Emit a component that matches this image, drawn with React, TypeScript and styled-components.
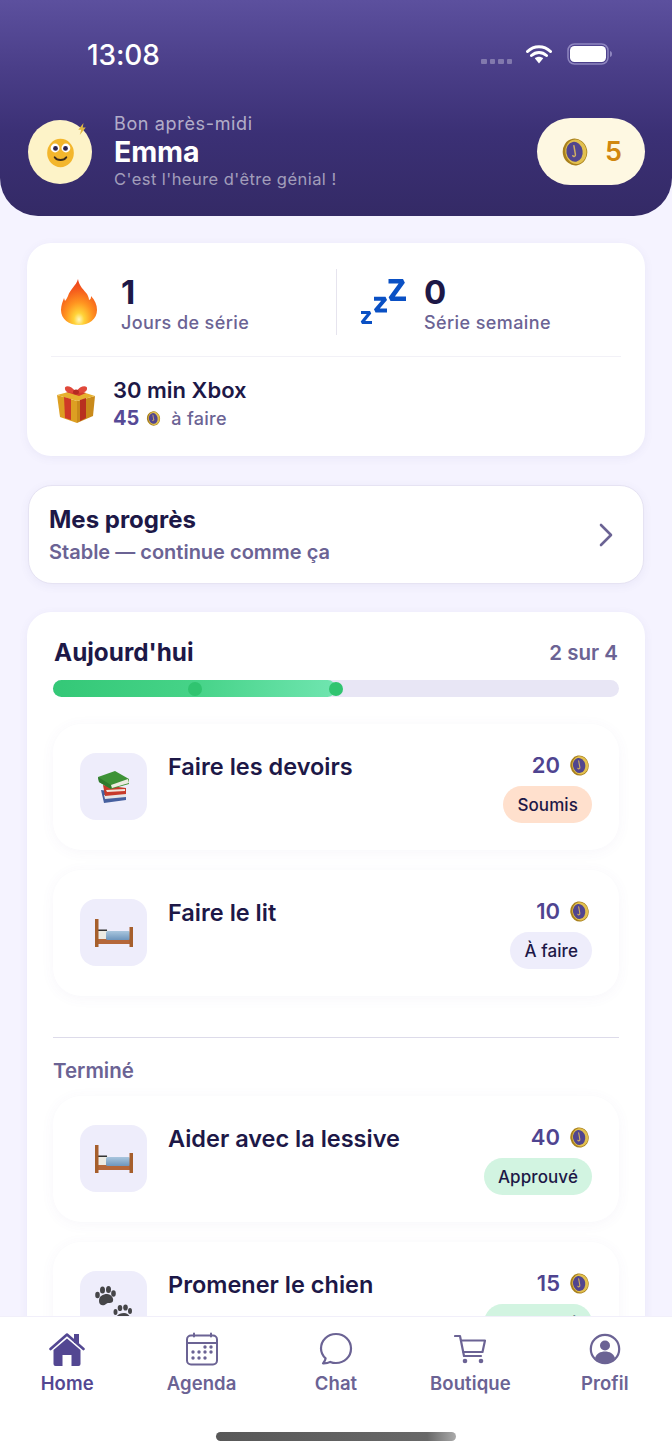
import React from "react";
import styled, { createGlobalStyle } from "styled-components";

const Global = createGlobalStyle`
  html, body { margin: 0; padding: 0; background: #f5f3ff; }
  * { box-sizing: border-box; }
  body { font-family: Inter, "Noto Sans", "Liberation Sans", sans-serif; }
`;

const Screen = styled.div`
  width: 672px; height: 1454px; display: flex; flex-direction: column;
  background: #f5f3ff; overflow: hidden;
`;
const Scroll = styled.main`flex: 1; min-height: 0; overflow: hidden;`;
const Header = styled.header`
  height: 216px; padding-bottom: 26px;
  background: linear-gradient(180deg, #5c509e 0%, #4a3e88 32%, #3b3075 62%, #342a66 100%);
  border-radius: 0 0 38px 38px;
`;
const StatusBar = styled.div`
  height: 113px; padding: 36px 59px 0 87px; display: flex; align-items: flex-start; justify-content: space-between;
`;
const Clock = styled.span`font-size: 28px; line-height: 38px; font-weight: 500; color: #fff; letter-spacing: -0.1px;`;
const StatusIcons = styled.div`display: flex; align-items: center; height: 36px;`;
const SignalDots = styled.div`display: flex; gap: 3px; margin: 14px 14px 0 0;`;
const SignalDot = styled.i`width: 5.5px; height: 5px; border-radius: 1px; background: rgba(255,255,255,.3);`;
const Greeting = styled.div`display: flex; align-items: center; height: 77px; padding: 0 27px 0 28px;`;
const Avatar = styled.div`
  position: relative; width: 64px; height: 64px; border-radius: 50%; background: #fdf3c8;
  display: flex; align-items: center; justify-content: center; flex: none;
`;
const AvatarSpark = styled.svg`position: absolute; right: 5px; top: 3px;`;
const GreetText = styled.div`flex: 1; margin-left: 22px; display: flex; flex-direction: column;`;
const Hello = styled.span`font-size: 18px; line-height: 21px; color: rgba(255,255,255,.62); letter-spacing: .65px;`;
const Name = styled.span`font-size: 28.5px; line-height: 35px; font-weight: 700; color: #fff; letter-spacing: -.1px;`;
const Tagline = styled.span`font-size: 16.5px; line-height: 21px; color: rgba(255,255,255,.55); letter-spacing: .45px;`;
const CoinPill = styled.div`
  width: 108px; height: 67px; border-radius: 34px; background: #fef8e2;
  display: flex; align-items: center; padding-left: 24px; gap: 16px;
`;
const CoinCount = styled.span`font-size: 27px; font-weight: 600; color: #d1870f;`;

const Content = styled.div`padding: 27px 27px 0; display: flex; flex-direction: column;`;
const Card = styled.section`background: #fff; border-radius: 24px; box-shadow: 0 2px 10px rgba(91,78,156,.07);`;
const StatsCard = styled(Card)`padding: 26px 24px 25px;`;
const StatsRow = styled.div`display: flex; height: 66px;`;
const Stat = styled.div<{ $gap: number; $pad: number; $line?: boolean }>`
  display: flex; align-items: center; gap: ${p => p.$gap}px; padding-left: ${p => p.$pad}px;
  width: ${p => (p.$line ? "286px" : "auto")}; flex: none;
  border-right: ${p => (p.$line ? "1px solid #e6e4ee" : "0")};
`;
const StatText = styled.div`display: flex; flex-direction: column; margin-top: 2px;`;
const StatNum = styled.span`font-size: 33px; line-height: 40px; font-weight: 700; color: #1d1847;`;
const StatLabel = styled.span`font-size: 18px; line-height: 22px; font-weight: 500; color: #6b6394; letter-spacing: .4px;`;
const HDivider = styled.hr`border: 0; height: 1px; background: #f2f1f7; margin: 21px 0 0;`;
const RewardRow = styled.div`display: flex; align-items: center; gap: 17px; padding: 20px 0 0 5px;`;
const RewardText = styled.div`display: flex; flex-direction: column; gap: 2px;`;
const RewardTitle = styled.span`font-size: 22px; line-height: 26px; font-weight: 600; color: #1d1847;`;
const RewardMeta = styled.span`display: flex; align-items: center; height: 26px; gap: 7px;`;
const RewardCost = styled.b`font-size: 20px; font-weight: 700; color: #564a96;`;
const RewardTodo = styled.span`font-size: 18px; font-weight: 500; color: #6b6394; margin-left: 3px; letter-spacing: .3px;`;

const ProgressCard = styled(Card)`
  margin: 29px 1px 0; height: 99px; padding: 0 30px 0 20px; display: flex; align-items: center; justify-content: space-between;
  border: 1px solid #e6e3f3;
`;
const ProgressText = styled.div`display: flex; flex-direction: column; gap: 5px; padding-top: 2px;`;
const ProgressTitle = styled.span`font-size: 24px; line-height: 28px; font-weight: 700; color: #1d1847;`;
const ProgressSub = styled.span`font-size: 20px; line-height: 26px; font-weight: 600; color: #6b6394;`;

const TodayCard = styled(Card)`margin-top: 28px; padding: 26px 26px 0;`;
const TodayHead = styled.div`display: flex; justify-content: space-between; align-items: center; padding: 0 1px 0 1px;`;
const TodayTitle = styled.h2`margin: 0; font-size: 24.3px; line-height: 28px; font-weight: 700; color: #1d1847;`;
const TodayCount = styled.span`font-size: 20.5px; font-weight: 600; color: #6b6394;`;
const Bar = styled.div`position: relative; height: 17px; margin-top: 14px; border-radius: 9px; background: #e8e6f5;`;
const BarFill = styled.div`height: 100%; border-radius: 9px; background: linear-gradient(90deg, #34c877 0%, #46d388 50%, #70e5b0 100%);`;
const BarDot = styled.i`position: absolute; top: 1.5px; width: 14px; height: 14px; margin-left: -7px; border-radius: 50%; background: #30c470;`;
const TaskList = styled.div`display: flex; flex-direction: column; gap: 20px;`;
const TopList = styled(TaskList)`margin-top: 27px;`;
const Task = styled.article`
  height: 126px; padding: 29px 27px 0; display: flex; align-items: flex-start; gap: 21px; border-radius: 28px; background: #fff;
  box-shadow: 0 2px 14px rgba(91,78,156,.05);
`;
const TaskIcon = styled.div`
  width: 67px; height: 67px; flex: none; border-radius: 16px; background: #eeedfb;
  display: flex; align-items: center; justify-content: center;
`;
const TaskTitle = styled.h3`flex: 1; margin: 0; font-size: 23.5px; line-height: 28px; font-weight: 600; color: #1d1847;`;
const TaskSide = styled.div`display: flex; flex-direction: column; align-items: flex-end; gap: 9px;`;
const Amount = styled.div`display: flex; align-items: center; gap: 9px; height: 24px; margin-right: 2px;`;
const AmountNum = styled.b`font-size: 22px; font-weight: 600; color: #4f4490;`;
const Badge = styled.span<{ $bg: string }>`
  height: 37px; padding: 0 14px; border-radius: 19px; display: flex; align-items: center;
  background: ${p => p.$bg}; font-size: 17px; font-weight: 500; color: #1d1847; letter-spacing: .1px;
`;
const Section = styled.hr`border: 0; height: 1px; background: #dddbea; margin: 41px 0 21px;`;
const SectionLabel = styled.div`font-size: 20.5px; line-height: 24px; font-weight: 600; color: #6b6394; margin-bottom: 13px;`;

const TabBar = styled.nav`height: 138px; flex: none; background: #fff; border-top: 1px solid #f1effa; padding-top: 15px;`;
const Tabs = styled.div`display: grid; grid-template-columns: repeat(5, 1fr);`;
const TabItem = styled.div<{ $active?: boolean }>`
  display: flex; flex-direction: column; align-items: center; color: ${p => (p.$active ? "#534792" : "#6b6394")};
`;
const TabIcon = styled.div`height: 34px; display: flex; align-items: center; justify-content: center;`;
const TabLabel = styled.span`margin-top: 5px; font-size: 18.5px; line-height: 24px; font-weight: 600; letter-spacing: .1px;`;
const HomeBar = styled.div`
  width: 240px; height: 9px; margin: 37px auto 0; border-radius: 5px;
  background: linear-gradient(90deg, #585858 0%, #686868 88%, #aaa 100%);
`;

const Coin = ({ size }: { size: number }) => (
  <svg width={size} height={size} viewBox="0 0 24 24" style={{ flex: "none" }}>
    <g transform="rotate(-10 12 12)">
      <ellipse cx="12" cy="12" rx="10.5" ry="11.500" fill="#a9801c" />
      <ellipse cx="12.800" cy="12" rx="9" ry="10.500" fill="#e2c04f" />
      <ellipse cx="11.600" cy="11.800" rx="7" ry="8.600" fill="#51458f" />
      <path d="M12 6.500v7.500M12 14c0 2-2 2-2.400.8" stroke="#d0ae62" strokeWidth="1.300" fill="none" strokeLinecap="round" />
    </g>
  </svg>
);

const Smiley = () => (
  <svg width="29" height="30" viewBox="0 0 34 36" style={{ marginTop: 2 }}>
    <ellipse cx="17" cy="18" rx="16" ry="17" fill="#f3b62c" />
    <circle cx="10.500" cy="12" r="5.300" fill="#fff" /><circle cx="23.500" cy="12" r="5.300" fill="#fff" />
    <circle cx="11" cy="12.500" r="2.900" fill="#2c2450" /><circle cx="23" cy="12.500" r="2.900" fill="#2c2450" />
    <path d="M10 23c3 4.500 11 4.500 14 0" stroke="#3a2a1a" strokeWidth="2.200" fill="none" strokeLinecap="round" />
  </svg>
);

const Fire = () => (
  <svg width="38" height="46" viewBox="0 0 38 46" style={{ flex: "none" }}>
    <defs>
      <radialGradient id="fl" cx=".5" cy=".88" r=".9">
        <stop offset="0" stopColor="#fff8c0" /><stop offset=".16" stopColor="#ffd338" />
        <stop offset=".42" stopColor="#ff9420" /><stop offset=".75" stopColor="#f4561c" /><stop offset="1" stopColor="#ea3f1c" />
      </radialGradient>
    </defs>
    <path fill="url(#fl)" d="M18 0c1 7 6 11 9 15 1 2 2 4 2 6 2-1 2-2 2-4 4 4 6 9 6 14 0 9-8 15-18 15S1 40 1 31c0-5 2-9 3-12l1 3c1-1 2-3 3-5 2-7 8-10 10-17Z" />
  </svg>
);

const Zzz = () => (
  <svg width="46" height="46" viewBox="0 0 46 46" style={{ flex: "none" }} fill="none" stroke="#0a50c4" strokeLinejoin="bevel">
    <path d="M28.500 2.300H43L30.500 19.700H46" strokeWidth="4.600" />
    <path d="M14 19.800h11.500L15.500 31.500H27" strokeWidth="4" />
    <path d="M1 33.500h9L2 43.500h10" strokeWidth="3.200" />
  </svg>
);

const Gift = () => (
  <svg width="40" height="40" viewBox="0 0 40 40" style={{ flex: "none" }}>
    <path d="M1 11l20 6v22L4 33Z" fill="#dd9f22" />
    <path d="M21 17l18-5-2 20-16 7Z" fill="#c98a1a" />
    <path d="M1 11L20 6l19 6-18 5Z" fill="#e6b12f" />
    <path d="M8 13l7 2v21l-6-2Z" fill="#cf3a26" />
    <path d="M30 14l-6 2v21l6-3Z" fill="#b8301f" />
    <path d="M10 8l10-2 10 3-7 3Z" fill="#d43c2c" />
    <path d="M20 8C15 1 8 1 9 5c0 3 6 5 11 3Zm0 0c4-7 12-7 11-3 0 3-6 5-11 3Z" fill="#e0483a" />
    <ellipse cx="20" cy="8" rx="3" ry="2.500" fill="#b52b22" />
  </svg>
);

const Books = () => (
  <svg width="34" height="34" viewBox="0 0 34 34">
    <path d="M4 20l25 3 0 7-22 3Z" fill="#46609f" />
    <path d="M7 25l22-2v4L8 29Z" fill="#e6e6e6" />
    <path d="M6 15l23 3 0 6L8 26Z" fill="#c73a2a" />
    <path d="M9 20l19-1 0 2-18 1Z" fill="#f1e6dc" />
    <path d="M1 7l17-6 14 8v5L14 19 2 12Z" fill="#3d9236" />
    <path d="M14 15l17-6 1 4-17 5Z" fill="#ecebe0" />
    <path d="M1 7l13 8v4L2 12Z" fill="#2f7a2d" />
  </svg>
);

const Bed = () => (
  <svg width="38" height="28" viewBox="0 0 38 28">
    <defs>
      <linearGradient id="mat" x1="0" x2="0" y1="0" y2="1">
        <stop offset="0" stopColor="#a9c6de" /><stop offset="1" stopColor="#6e96bd" />
      </linearGradient>
    </defs>
    <rect x="3" y="17" width="32" height="8" fill="#b5673a" />
    <rect x="3" y="11" width="10" height="9" fill="#ecebe4" />
    <rect x="11" y="12" width="24" height="9" rx="1.500" fill="url(#mat)" />
    <rect x="3" y="10.500" width="9" height="1.500" fill="#333" />
    <rect x="0" y="0" width="3.500" height="28" fill="#a65f2c" />
    <rect x="34.500" y="8" width="3.500" height="20" fill="#a65f2c" />
  </svg>
);

const Paws = () => (
  <svg width="38" height="38" viewBox="0 0 38 38" fill="#454548">
    <path d="M4 15c0-5 4-7 8-7s7 4 6 7-5 1-7 3-7 2-7-3Z" />
    <ellipse cx="2.500" cy="9" rx="2.300" ry="3.300" /><ellipse cx="7.500" cy="4" rx="2.500" ry="3.500" />
    <ellipse cx="13.500" cy="3.500" rx="2.500" ry="3.500" /><ellipse cx="18.500" cy="7.500" rx="2.300" ry="3.200" />
    <g transform="translate(19 19)">
      <path d="M2 14c0-4 4-6 8-6s6 3 6 5-4 2-6 3-8 2-8-2Z" />
      <ellipse cx="1.500" cy="7" rx="2" ry="3" /><ellipse cx="6" cy="3" rx="2.300" ry="3.100" />
      <ellipse cx="11.500" cy="2.500" rx="2.300" ry="3.100" /><ellipse cx="16" cy="6" rx="2" ry="2.900" />
    </g>
  </svg>
);

const tasks1 = [
  { icon: <Books />, title: "Faire les devoirs", amount: 20, status: "Soumis", bg: "#ffe0cd" },
  { icon: <Bed />, title: "Faire le lit", amount: 10, status: "À faire", bg: "#eeedfb" },
];
const tasks2 = [
  { icon: <Bed />, title: "Aider avec la lessive", amount: 40, status: "Approuvé", bg: "#d2f4e1" },
  { icon: <Paws />, title: "Promener le chien", amount: 15, status: "Approuvé", bg: "#d2f4e1" },
];

const TaskRow = ({ t }: { t: typeof tasks1[number] }) => (
  <Task>
    <TaskIcon>{t.icon}</TaskIcon>
    <TaskTitle>{t.title}</TaskTitle>
    <TaskSide>
      <Amount><AmountNum>{t.amount}</AmountNum><Coin size={21} /></Amount>
      <Badge $bg={t.bg}>{t.status}</Badge>
    </TaskSide>
  </Task>
);

const stroke = { fill: "none", stroke: "currentColor", strokeWidth: 2.4, strokeLinecap: "round", strokeLinejoin: "round" } as const;

const tabs = [
  { label: "Home", active: true, icon: (
    <svg width="36" height="34" viewBox="0 0 36 34" fill="currentColor">
      <path d="M1.500 17L18 2.500 34.500 17" {...stroke} strokeWidth={2.600} />
      <rect x="25" y="2" width="5" height="9" />
      <path d="M4.500 18L18 6.500 31.500 18v14a2 2 0 0 1-2 2h-7V23h-9v11h-7a2 2 0 0 1-2-2Z" />
    </svg>) },
  { label: "Agenda", icon: (
    <svg width="34" height="34" viewBox="0 0 34 34" fill="currentColor">
      <rect x="2" y="3.500" width="30" height="29" rx="4" {...stroke} strokeWidth={2} />
      <path d="M2 11h30M9 1.500v3M26 1.500v3" {...stroke} strokeWidth={2} />
      {[[20, 15], [26, 15], [8, 20], [14, 20], [20, 20], [26, 20], [8, 26], [14, 26], [20, 26]].map(([x, y]) => (
        <circle key={`${x}-${y}`} cx={x} cy={y} r="1.700" />
      ))}
    </svg>) },
  { label: "Chat", icon: (
    <svg width="34" height="34" viewBox="0 0 34 34">
      <path d="M17 2c8.500 0 15 6.300 15 14.500S25.500 31 17 31c-2 0-4-.4-5.700-1.100-1.800 1-4.200 1.600-7.300 1.500 1.500-1.600 2.400-3.300 2.600-5C3.700 23.700 2 20.300 2 16.500 2 8.300 8.500 2 17 2Z" {...stroke} strokeWidth={2.200} />
    </svg>) },
  { label: "Boutique", icon: (
    <svg width="32" height="30" viewBox="0 0 32 30" fill="currentColor">
      <path d="M1 2h5l4 20h17" {...stroke} strokeWidth={2.200} />
      <path d="M7 6.500h24l-2.500 11.500H9.500" {...stroke} strokeWidth={2.200} />
      <circle cx="11" cy="27" r="2.300" /><circle cx="27" cy="27" r="2.300" />
    </svg>) },
  { label: "Profil", icon: (
    <svg width="32" height="32" viewBox="0 0 32 32" fill="currentColor">
      <circle cx="16" cy="16" r="14.200" fill="none" stroke="currentColor" strokeWidth="2.200" />
      <circle cx="16" cy="12.500" r="5" />
      <path d="M6 25c1.500-4.500 5.500-6.500 10-6.500S24.500 20.500 26 25c-2.500 3-6 5-10 5s-7.500-2-10-5Z" />
    </svg>) },
];

export default function App() {
  return (
    <Screen>
      <Global />
      <Scroll>
        <Header>
          <StatusBar>
            <Clock>13:08</Clock>
            <StatusIcons>
              <SignalDots><SignalDot /><SignalDot /><SignalDot /><SignalDot /></SignalDots>
              <svg width="26" height="20" viewBox="0 0 26 20" style={{ marginRight: 15 }}>
                <path d="M1.500 7.500C8 1 18 1 24.500 7.500M5.500 11.500c4.500-4 10.500-4 15 0" fill="none" stroke="#fff" strokeWidth="3" strokeLinecap="round" />
                <path d="M8.800 14.200c2.500-2 5.900-2 8.400 0L13 19.500Z" fill="#fff" />
              </svg>
              <svg width="46" height="22" viewBox="0 0 46 22">
                <rect x="1" y="1" width="40" height="20" rx="6.500" fill="none" stroke="#8f86c0" strokeWidth="1.500" />
                <rect x="3" y="3" width="36" height="16" rx="4.500" fill="#fff" />
                <path d="M43 8c1.500.3 2 1.500 2 3s-.5 2.700-2 3Z" fill="#8f86c0" />
              </svg>
            </StatusIcons>
          </StatusBar>
          <Greeting>
            <Avatar>
              <Smiley />
              <AvatarSpark width="10" height="12" viewBox="0 0 12 16"><path d="M8 0L1 9h4L3 16l8-10H7Z" fill="#e0b742" /></AvatarSpark>
            </Avatar>
            <GreetText>
              <Hello>Bon après-midi</Hello>
              <Name>Emma</Name>
              <Tagline>C'est l'heure d'être génial !</Tagline>
            </GreetText>
            <CoinPill><Coin size={28} /><CoinCount>5</CoinCount></CoinPill>
          </Greeting>
        </Header>
        <Content>
          <StatsCard>
            <StatsRow>
              <Stat $gap={23} $pad={9} $line><Fire /><StatText><StatNum>1</StatNum><StatLabel>Jours de série</StatLabel></StatText></Stat>
              <Stat $gap={18} $pad={23}><Zzz /><StatText><StatNum>0</StatNum><StatLabel>Série semaine</StatLabel></StatText></Stat>
            </StatsRow>
            <HDivider />
            <RewardRow>
              <Gift />
              <RewardText>
                <RewardTitle>30 min Xbox</RewardTitle>
                <RewardMeta><RewardCost>45</RewardCost><Coin size={15} /><RewardTodo>à faire</RewardTodo></RewardMeta>
              </RewardText>
            </RewardRow>
          </StatsCard>
          <ProgressCard>
            <ProgressText><ProgressTitle>Mes progrès</ProgressTitle><ProgressSub>Stable — continue comme ça</ProgressSub></ProgressText>
            <svg width="14" height="24" viewBox="0 0 14 24"><path d="M2 2l10 10L2 22" fill="none" stroke="#6b6394" strokeWidth="2.600" strokeLinecap="round" strokeLinejoin="round" /></svg>
          </ProgressCard>
          <TodayCard>
            <TodayHead><TodayTitle>Aujourd'hui</TodayTitle><TodayCount>2 sur 4</TodayCount></TodayHead>
            <Bar>
              <BarFill style={{ width: "50%" }} />
              <BarDot style={{ left: "25%" }} />
              <BarDot style={{ left: "50%" }} />
            </Bar>
            <TopList>{tasks1.map(t => <TaskRow key={t.title} t={t} />)}</TopList>
            <Section />
            <SectionLabel>Terminé</SectionLabel>
            <TaskList>{tasks2.map(t => <TaskRow key={t.title} t={t} />)}</TaskList>
          </TodayCard>
        </Content>
      </Scroll>
      <TabBar>
        <Tabs>
          {tabs.map(t => (
            <TabItem key={t.label} $active={t.active}>
              <TabIcon>{t.icon}</TabIcon>
              <TabLabel>{t.label}</TabLabel>
            </TabItem>
          ))}
        </Tabs>
        <HomeBar />
      </TabBar>
    </Screen>
  );
}
